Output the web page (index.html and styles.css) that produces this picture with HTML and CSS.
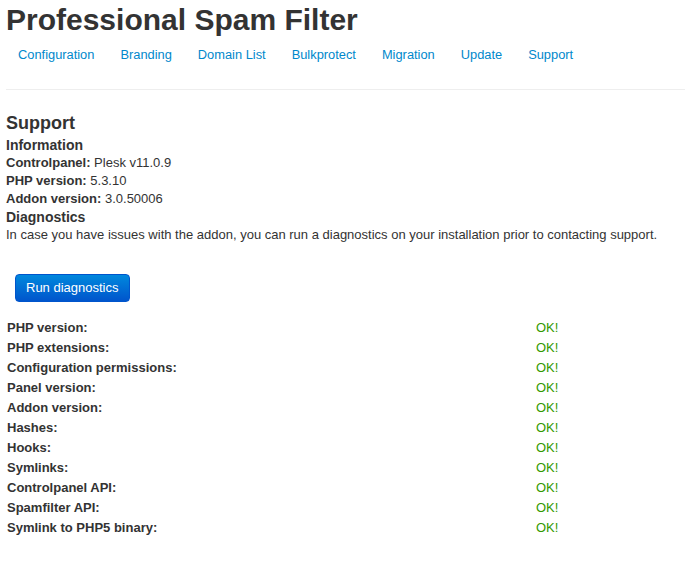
FILE: index.html
```html
<!DOCTYPE html>
<html>
<head>
<meta charset="utf-8">
<link rel="stylesheet" href="styles.css">
</head>
<body>
<h1 class="title">Professional Spam Filter</h1>
<ul class="nav">
  <li><a href="#">Configuration</a></li>
  <li><a href="#">Branding</a></li>
  <li><a href="#">Domain List</a></li>
  <li><a href="#">Bulkprotect</a></li>
  <li><a href="#">Migration</a></li>
  <li><a href="#">Update</a></li>
  <li><a href="#">Support</a></li>
</ul>
<hr class="rule">
<h3 class="section">Support</h3>
<h4 class="sub">Information</h4>
<div class="info"><b>Controlpanel:</b> Plesk v11.0.9</div>
<div class="info"><b>PHP version:</b> 5.3.10</div>
<div class="info"><b>Addon version:</b> 3.0.50006</div>
<h4 class="sub">Diagnostics</h4>
<p class="desc">In case you have issues with the addon, you can run a diagnostics on your installation prior to contacting support.</p>
<div class="actions"><button class="btn">Run diagnostics</button></div>
<table class="diag">
  <tr><td class="lbl">PHP version:</td><td class="ok">OK!</td></tr>
  <tr><td class="lbl">PHP extensions:</td><td class="ok">OK!</td></tr>
  <tr><td class="lbl">Configuration permissions:</td><td class="ok">OK!</td></tr>
  <tr><td class="lbl">Panel version:</td><td class="ok">OK!</td></tr>
  <tr><td class="lbl">Addon version:</td><td class="ok">OK!</td></tr>
  <tr><td class="lbl">Hashes:</td><td class="ok">OK!</td></tr>
  <tr><td class="lbl">Hooks:</td><td class="ok">OK!</td></tr>
  <tr><td class="lbl">Symlinks:</td><td class="ok">OK!</td></tr>
  <tr><td class="lbl">Controlpanel API:</td><td class="ok">OK!</td></tr>
  <tr><td class="lbl">Spamfilter API:</td><td class="ok">OK!</td></tr>
  <tr><td class="lbl">Symlink to PHP5 binary:</td><td class="ok">OK!</td></tr>
</table>
</body>
</html>
```
FILE: styles.css
```css
html, body { background: #fff; }
body {
  margin: 0;
  padding: 0 6px;
  font-family: "Liberation Sans", Arial, sans-serif;
  font-size: 13px;
  line-height: 18px;
  color: #333;
}
.title {
  margin: 0;
  padding-top: 4px;
  font-size: 30px;
  line-height: 32px;
  font-weight: bold;
  color: #333;
}
.nav {
  list-style: none;
  margin: 2px 0 0 0;
  padding: 0;
  display: flex;
}
.nav li { margin-right: 2px; }
.nav a {
  display: block;
  padding: 8px 12px;
  font-size: 12.85px;
  line-height: 18px;
  color: #0088cc;
  text-decoration: none;
}
.rule {
  margin: 17px -6px 0 0;
  border: 0;
  border-top: 1px solid #eee;
  height: 0;
}
.section {
  margin: 22px 0 2px 0;
  font-size: 18px;
  line-height: 22px;
  font-weight: bold;
}
.sub {
  margin: 0;
  font-size: 14px;
  line-height: 18px;
  font-weight: bold;
}
.info { font-size: 13px; line-height: 18px; }
.desc { margin: 0; font-size: 13px; line-height: 18px; }
.actions { margin-top: 30px; padding-left: 9px; }
.btn {
  font-family: "Liberation Sans", Arial, sans-serif;
  font-size: 13px;
  line-height: 18px;
  padding: 4px 10px;
  color: #fff;
  border: 1px solid #0055cc;
  border-radius: 4px;
  background: linear-gradient(#0088dd, #0055cc);
}
.diag {
  margin-top: 16px;
  border-collapse: collapse;
  width: 100%;
}
.diag td { padding: 0 1px; height: 20px; font-size: 13px; }
.lbl { width: 527px; font-weight: bold; }
.ok { color: #339900; }
```
